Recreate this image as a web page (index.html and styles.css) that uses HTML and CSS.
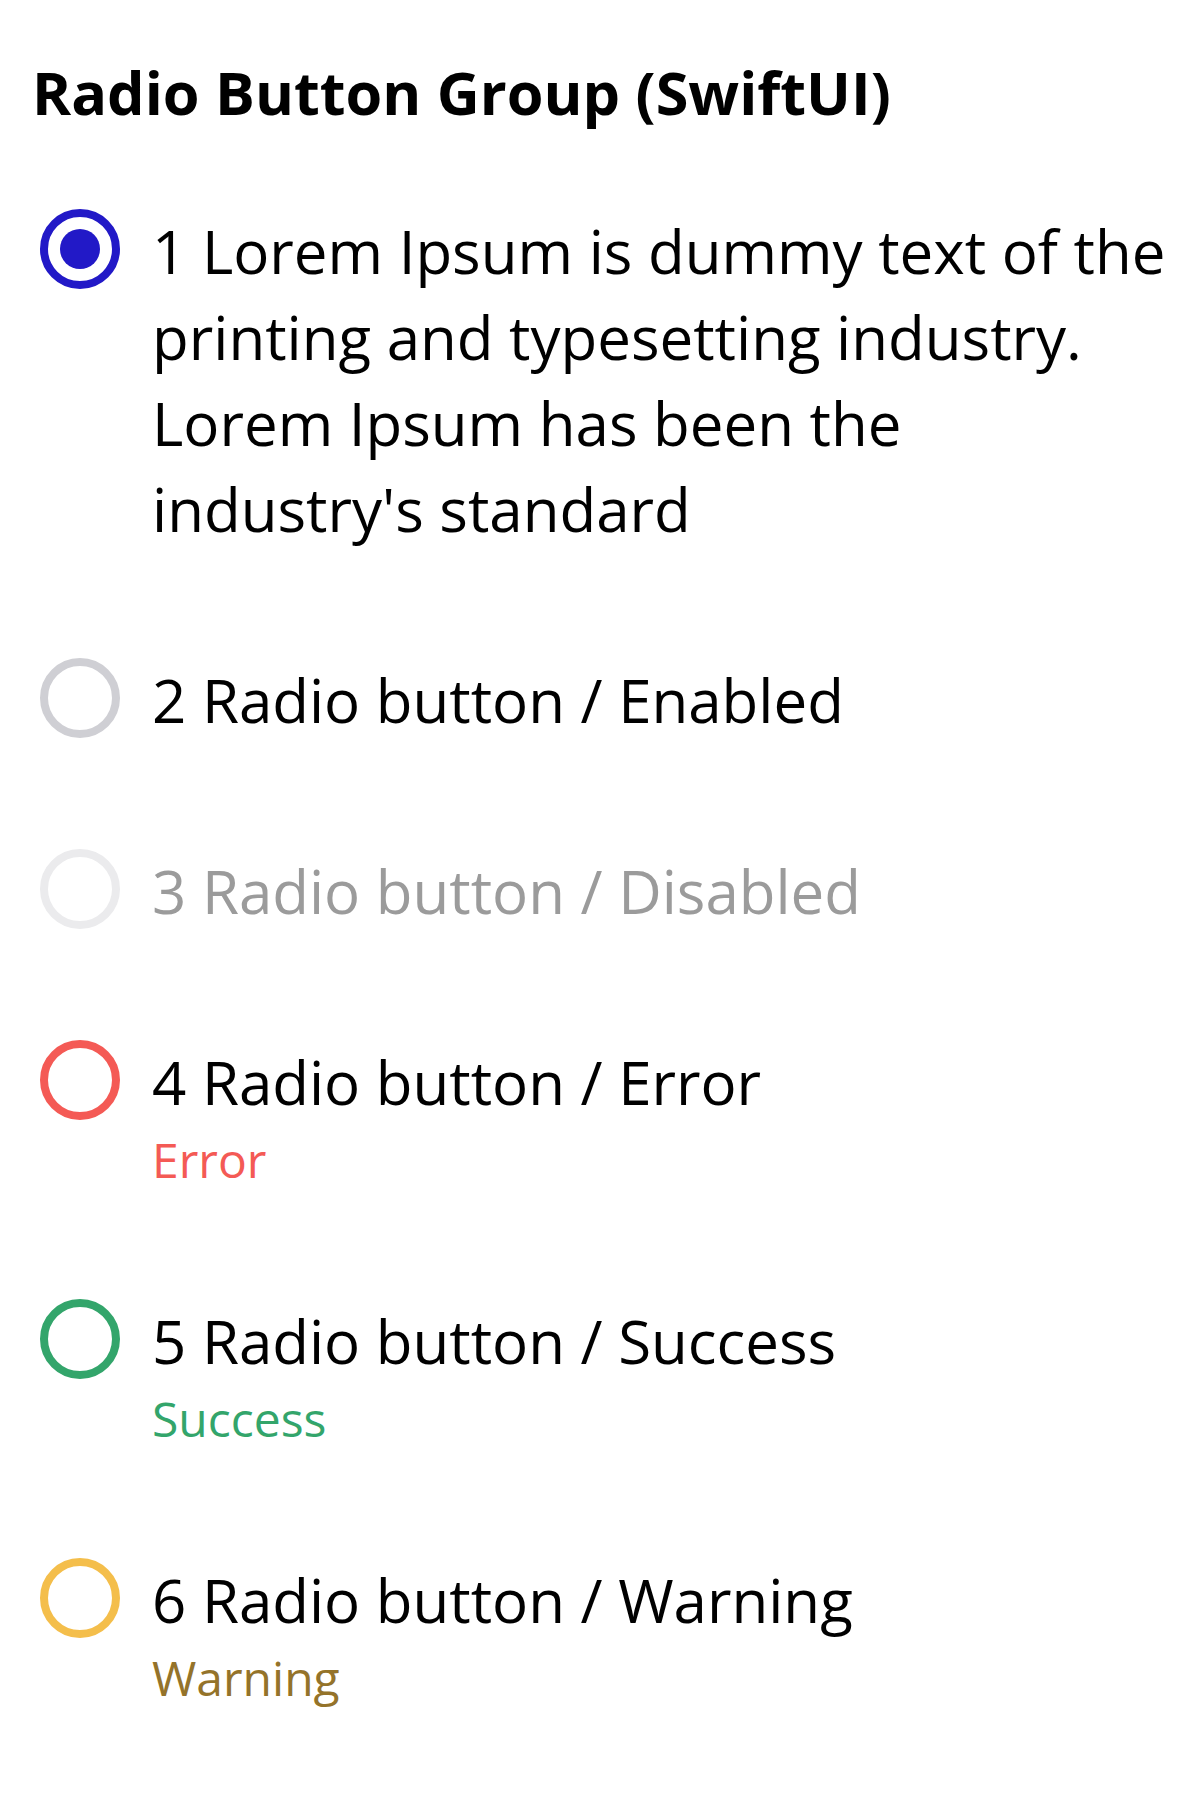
FILE: index.html
```html
<!DOCTYPE html>
<html lang="en">
<head>
<meta charset="utf-8">
<title>Radio Button Group (SwiftUI)</title>
<link rel="stylesheet" href="styles.css">
</head>
<body>
<main class="page">
  <h1 class="title">Radio Button Group (SwiftUI)</h1>
  <div class="group" role="radiogroup">
    <div class="row" role="radio" aria-checked="true">
      <span class="radio radio--selected"><span class="dot"></span></span>
      <div class="content">
        <p class="label">1 Lorem Ipsum is dummy text of the printing and typesetting industry. Lorem Ipsum has been the industry's standard</p>
      </div>
    </div>
    <div class="row" role="radio" aria-checked="false">
      <span class="radio radio--enabled"></span>
      <div class="content">
        <p class="label">2 Radio button / Enabled</p>
      </div>
    </div>
    <div class="row" role="radio" aria-checked="false" aria-disabled="true">
      <span class="radio radio--disabled"></span>
      <div class="content">
        <p class="label label--disabled">3 Radio button / Disabled</p>
      </div>
    </div>
    <div class="row" role="radio" aria-checked="false">
      <span class="radio radio--error"></span>
      <div class="content">
        <p class="label">4 Radio button / Error</p>
        <p class="helper helper--error">Error</p>
      </div>
    </div>
    <div class="row" role="radio" aria-checked="false">
      <span class="radio radio--success"></span>
      <div class="content">
        <p class="label">5 Radio button / Success</p>
        <p class="helper helper--success">Success</p>
      </div>
    </div>
    <div class="row" role="radio" aria-checked="false">
      <span class="radio radio--warning"></span>
      <div class="content">
        <p class="label">6 Radio button / Warning</p>
        <p class="helper helper--warning">Warning</p>
      </div>
    </div>
  </div>
</main>
</body>
</html>
```
FILE: styles.css
```css
* {
  box-sizing: border-box;
}

html, body {
  margin: 0;
  padding: 0;
  background: #ffffff;
}

body {
  font-family: "Open Sans", "Noto Sans", sans-serif;
  color: #000000;
}

.page {
  padding: 51px 24px 40px 32px;
}

.title {
  margin: 0;
  font-size: 59.4px;
  font-weight: 700;
  line-height: 82px;
  color: #000000;
}

.group {
  display: flex;
  flex-direction: column;
  gap: 105px;
  margin-top: 75px;
}

.row {
  display: flex;
  align-items: flex-start;
  gap: 32px;
}

.radio {
  flex: none;
  width: 80px;
  height: 80px;
  margin-left: 8px;
  margin-top: 1px;
  border-radius: 50%;
  border: 8px solid #cfcfd4;
  display: flex;
  align-items: center;
  justify-content: center;
  background: #ffffff;
}

.radio--selected {
  border-color: #2219c7;
}

.dot {
  width: 40px;
  height: 40px;
  border-radius: 50%;
  background: #2219c7;
}

.radio--enabled {
  border-color: #cfcfd4;
}

.radio--disabled {
  border-color: #ebebed;
}

.radio--error {
  border-color: #f45a55;
}

.radio--success {
  border-color: #33a56b;
}

.radio--warning {
  border-color: #f4be4b;
}

.content {
  flex: 1;
  min-width: 0;
}

.label {
  margin: 0;
  font-size: 60px;
  line-height: 86px;
  color: #000000;
}

.label--disabled {
  color: #9b9b9b;
}

.helper {
  margin: 2px 0 0;
  font-size: 48px;
  line-height: 66px;
}

.helper--error {
  color: #f45a55;
}

.helper--success {
  color: #33a56b;
}

.helper--warning {
  color: #94732a;
}
```
